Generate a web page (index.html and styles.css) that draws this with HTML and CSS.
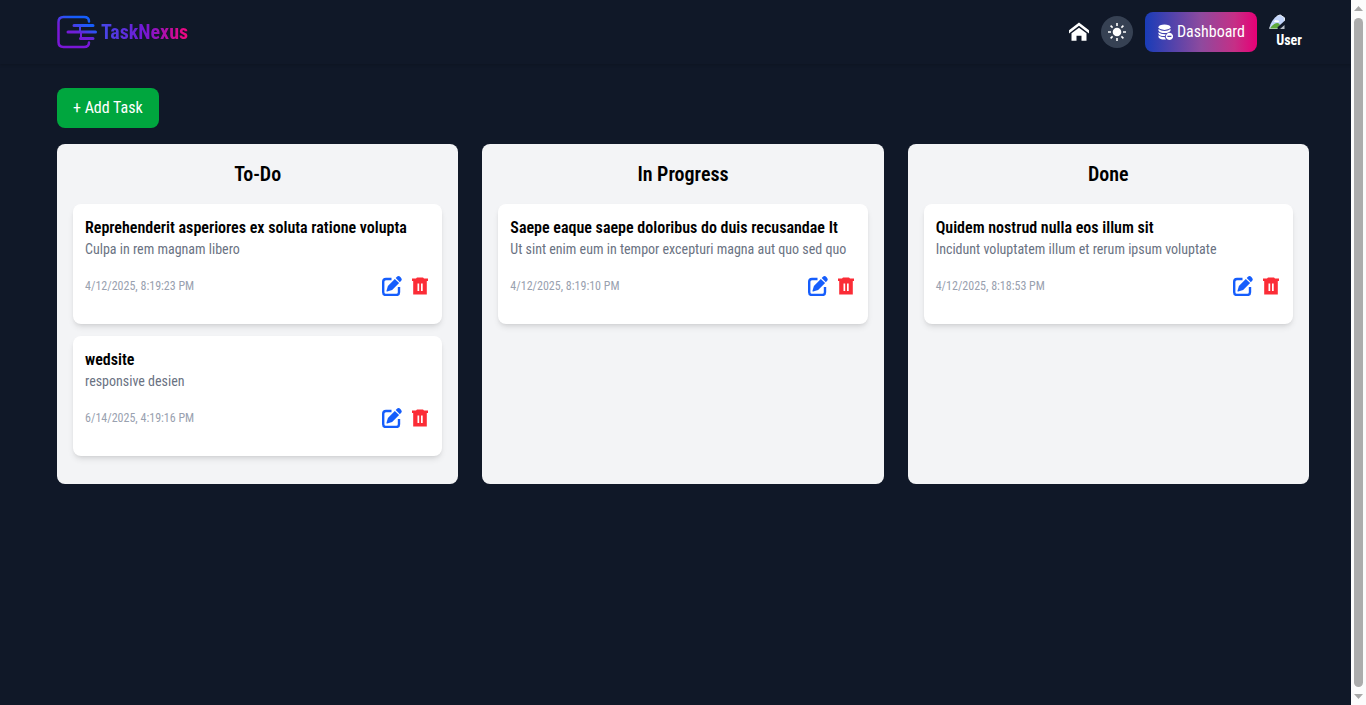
FILE: index.html
```html
<!DOCTYPE html>
<html lang="en">
<head>
  <meta charset="UTF-8">
  <meta name="viewport" content="width=device-width, initial-scale=1.0">
  <title>TaskNexus</title>
  <link rel="stylesheet" href="styles.css">
</head>
<body>
  <!-- Shared icons -->
  <svg class="sprite" aria-hidden="true">
    <symbol id="icon-edit" viewBox="0 0 20 20">
      <path d="M9.500 3H4Q1.200 3 1.200 5.800V16.200Q1.200 19 4 19H14.200Q17 19 17 16.200V11" fill="none" stroke="currentColor" stroke-width="2.400"/>
      <path d="M12.800 2.900l4.300 4.200-7 7-4.900 1.400q-.9.100-.7-.8l1.400-4.800zM13.700 2l1.500-1.400q1.500-1.300 3.400.6t.7 3.400L17.900 6.200z" fill="currentColor"/>
    </symbol>
    <symbol id="icon-trash" viewBox="0 0 20 20">
      <path fill-rule="evenodd" fill="currentColor" d="M7 1.500h6l1 1h4v2.500h-1.200v13.500H3.200V5H2V2.500h4zM7.500 7.500v7.500H9.200V7.500zm3.500 0v7.500h1.700V7.500z"/>
    </symbol>
  </svg>

  <header class="navbar">
    <div class="container navbar-inner">
      <a href="#" class="brand">
        <svg class="brand-logo" viewBox="0 0 40 34" aria-hidden="true">
          <defs>
            <linearGradient id="logoGradient" gradientUnits="userSpaceOnUse" x1="25" y1="6" x2="17" y2="22">
              <stop offset="0" stop-color="#155dfc"/>
              <stop offset="0.25" stop-color="#2f50f4"/>
              <stop offset="0.65" stop-color="#6a22d8"/>
              <stop offset="1" stop-color="#7a17d8"/>
            </linearGradient>
          </defs>
          <g fill="none" stroke="url(#logoGradient)" stroke-linecap="round">
            <path stroke-width="2.500" d="M32 6.500Q32 2 27 2H6.500Q1.500 2 1.500 7v20q0 5 5 5H27q5 0 5-4.500"/>
            <path stroke-width="3" d="M17 10.500H36M11 17H38.500M23.500 23.500h12.500"/>
            <path stroke-width="2" d="M23 10.500V17M24 17v6.500"/>
          </g>
        </svg>
        <span class="brand-name">TaskNexus</span>
      </a>

      <nav class="nav-actions">
        <a href="#" class="home-link" aria-label="Home">
          <svg width="20" height="20" viewBox="0 0 16 16" aria-hidden="true">
            <path fill="currentColor" d="M16 9.226l-8-6.210-8 6.210V6.694L8 .485l8 6.210zM14 9v6h-4v-4H6v4H2V9l6-4.500z"/>
          </svg>
        </a>
        <button type="button" class="theme-toggle" aria-label="Toggle theme">
          <svg width="20" height="20" viewBox="0 0 20 20" aria-hidden="true">
            <circle cx="10" cy="10" r="4.300" fill="currentColor"/>
            <path stroke="currentColor" stroke-width="1.600" d="M10 1v3M10 16v3M1 10h3M16 10h3M3.600 3.600l2 2M14.400 14.400l2 2M3.600 16.400l2-2M14.400 5.600l2-2"/>
          </svg>
        </button>
        <a href="#" class="dashboard-link">
          <svg width="16" height="16" viewBox="0 0 16 16" aria-hidden="true">
            <g fill="currentColor">
              <ellipse cx="7.500" cy="3.200" rx="6" ry="2.700"/>
              <path d="M1.500 5.100q2.200 2 6 2t6-2v1.600q-1.600 2.300-6 2.300t-6-2.300zM1.500 8.200q2.200 2 6 2h1.200a5 5 0 0 0-.7 1.900q-4.700.1-6.500-2.200zM1.500 11.300q2.200 2 6.500 2 .2 1.300 1 2.200-5.900.5-7.500-2.200z"/>
              <path fill-rule="evenodd" d="M12.400 8.800a3.600 3.600 0 1 0 .1 0zM10.400 11.800h4v1.300h-4z"/>
            </g>
          </svg>
          Dashboard
        </a>
        <button type="button" class="avatar">
          <svg width="16" height="16" viewBox="0 0 16 16" aria-hidden="true">
            <path fill="#c3d5fb" stroke="#e8edf5" d="M.5 14.500V10Q3 3 11 .8l4.500 3v4.700l-5.500 6z"/>
            <path fill="#fff" d="M5 8q1-3 3-1.500 2-1 2 1.500z"/>
            <path fill="#5fa83c" d="M1 14.500q3-5 7-5.500 2-.3 3 2l-3 3.500z"/>
            <path fill="#101828" d="M16 6.500l-7.500 6.700V16l7.500-5z"/>
            <path fill="#b9bfc9" d="M11 15l4.500-4V15z"/>
          </svg>
          <span>User</span>
        </button>
      </nav>
    </div>
  </header>

  <main class="container board-page">
    <button type="button" class="add-task">+ Add Task</button>

    <div class="board">
      <section class="column">
        <h2>To-Do</h2>
        <article class="task">
          <h3>Reprehenderit asperiores ex soluta ratione volupta</h3>
          <p>Culpa in rem magnam libero</p>
          <div class="task-footer">
            <time>4/12/2025, 8:19:23 PM</time>
            <div class="task-actions">
              <button type="button" class="edit" aria-label="Edit task"><svg><use href="#icon-edit"/></svg></button>
              <button type="button" class="delete" aria-label="Delete task"><svg><use href="#icon-trash"/></svg></button>
            </div>
          </div>
        </article>
        <article class="task">
          <h3>wedsite</h3>
          <p>responsive desien</p>
          <div class="task-footer">
            <time>6/14/2025, 4:19:16 PM</time>
            <div class="task-actions">
              <button type="button" class="edit" aria-label="Edit task"><svg><use href="#icon-edit"/></svg></button>
              <button type="button" class="delete" aria-label="Delete task"><svg><use href="#icon-trash"/></svg></button>
            </div>
          </div>
        </article>
      </section>

      <section class="column">
        <h2>In Progress</h2>
        <article class="task">
          <h3>Saepe eaque saepe doloribus do duis recusandae It</h3>
          <p>Ut sint enim eum in tempor excepturi magna aut quo sed quo</p>
          <div class="task-footer">
            <time>4/12/2025, 8:19:10 PM</time>
            <div class="task-actions">
              <button type="button" class="edit" aria-label="Edit task"><svg><use href="#icon-edit"/></svg></button>
              <button type="button" class="delete" aria-label="Delete task"><svg><use href="#icon-trash"/></svg></button>
            </div>
          </div>
        </article>
      </section>

      <section class="column">
        <h2>Done</h2>
        <article class="task">
          <h3>Quidem nostrud nulla eos illum sit</h3>
          <p>Incidunt voluptatem illum et rerum ipsum voluptate</p>
          <div class="task-footer">
            <time>4/12/2025, 8:18:53 PM</time>
            <div class="task-actions">
              <button type="button" class="edit" aria-label="Edit task"><svg><use href="#icon-edit"/></svg></button>
              <button type="button" class="delete" aria-label="Delete task"><svg><use href="#icon-trash"/></svg></button>
            </div>
          </div>
        </article>
      </section>
    </div>
  </main>

  <div class="scrollbar" aria-hidden="true">
    <svg width="9" height="5" viewBox="0 0 9 5"><path d="M0 5L4.500 0 9 5z"/></svg>
    <div class="scrollbar-thumb"></div>
    <svg width="9" height="5" viewBox="0 0 9 5"><path d="M0 0l4.500 5L9 0z"/></svg>
  </div>
</body>
</html>
```
FILE: styles.css
```css
* {
  box-sizing: border-box;
  margin: 0;
  padding: 0;
}
body {
  min-height: 100vh;
  font-family: "Roboto Condensed", "Liberation Sans Narrow", Roboto, sans-serif;
  font-size: 16px;
  line-height: 24px;
  background-color: #101828;
  color: #000;
}
button {
  font: inherit;
  color: inherit;
  background: none;
  border: none;
  cursor: pointer;
}
a {
  color: inherit;
  text-decoration: none;
}
svg {
  display: block;
}
.sprite {
  display: none;
}
.container {
  max-width: 1280px;
  margin: 0 auto;
  padding: 0 14px;
}

/* Navbar */
.navbar {
  color: #fff;
  box-shadow: 0 1px 3px rgba(0, 0, 0, 0.2);
}
.navbar-inner {
  display: flex;
  align-items: center;
  justify-content: space-between;
  height: 64px;
}
.brand {
  display: flex;
  align-items: center;
  gap: 4px;
}
.brand-logo {
  width: 40px;
  height: 34px;
}
.brand-name {
  font-size: 20px;
  line-height: 28px;
  font-weight: 700;
  background: linear-gradient(to right, #4448e8, #7317d4 50%, #f6067b);
  background-clip: text;
  -webkit-background-clip: text;
  color: transparent;
}
.nav-actions {
  display: flex;
  align-items: center;
  gap: 12px;
}
.theme-toggle {
  display: flex;
  align-items: center;
  justify-content: center;
  width: 32px;
  height: 32px;
  border-radius: 50%;
  background-color: #364153;
}
.dashboard-link {
  display: flex;
  align-items: center;
  gap: 4px;
  padding: 8px 12px;
  border-radius: 8px;
  background: linear-gradient(to right, #193cb8, #8e4a9e 50%, #c52f86 80%, #e60076);
}
.avatar {
  width: 40px;
  height: 40px;
  overflow: hidden;
  border-radius: 50%;
  text-align: center;
  font-size: 14px;
  line-height: 20px;
  font-weight: 700;
}

/* Board */
.board-page {
  padding-top: 24px;
  padding-bottom: 24px;
}
.add-task {
  margin-bottom: 16px;
  padding: 8px 16px;
  border-radius: 8px;
  background-color: #00a63e;
  color: #fff;
}
.board {
  display: grid;
  grid-template-columns: repeat(3, 1fr);
  gap: 24px;
}
.column {
  padding: 16px;
  border-radius: 8px;
  background-color: #f3f4f6;
}
.column h2 {
  margin-bottom: 16px;
  font-size: 20px;
  line-height: 28px;
  font-weight: 600;
  text-align: center;
}
.task {
  margin-bottom: 12px;
  padding: 12px;
  border-radius: 8px;
  background-color: #fff;
  box-shadow: 0 4px 6px -1px rgba(0, 0, 0, 0.1), 0 2px 4px -2px rgba(0, 0, 0, 0.1);
}
.task h3 {
  font-size: 16px;
  line-height: 24px;
  font-weight: 600;
}
.task p {
  font-size: 14px;
  line-height: 18px;
  color: #6a7282;
}
.task-footer {
  display: flex;
  align-items: center;
  justify-content: space-between;
  margin: 18px 0 16px;
}
.task-footer time {
  font-size: 12px;
  line-height: 16px;
  color: #99a1af;
}
.task-actions {
  display: flex;
  gap: 8px;
}
.task-actions svg {
  width: 20px;
  height: 20px;
}
.edit {
  color: #155dfc;
}
.delete {
  color: #fb2c36;
}

/* Scrollbar */
.scrollbar {
  position: fixed;
  top: 0;
  right: 0;
  bottom: 0;
  display: flex;
  flex-direction: column;
  align-items: center;
  gap: 7px;
  width: 15px;
  padding: 6px 0;
  background-color: #fcfcfc;
  fill: #a8a8a8;
}
.scrollbar-thumb {
  flex: 1;
  width: 9px;
  border-radius: 5px;
  background-color: #acacac;
}
```
